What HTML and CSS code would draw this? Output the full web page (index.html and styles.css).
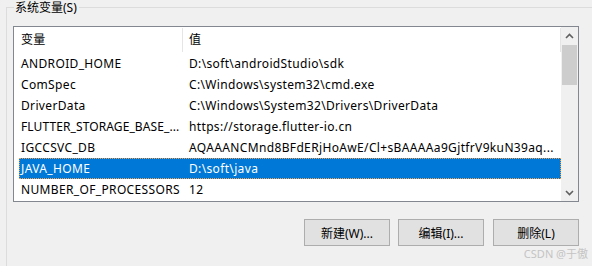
FILE: index.html
```html
<!DOCTYPE html>
<html lang="zh-CN">
<head>
    <meta charset="UTF-8">
    <title>系统变量</title>
    <link rel="stylesheet" href="styles.css">
</head>
<body>

<fieldset class="group">
    <legend>系统变量(S)</legend>

    <div class="list">
        <div class="list-body">
            <div class="list-head">
                <div class="col name">变量</div>
                <div class="col value">值</div>
            </div>
            <div class="row">
                <div class="col name">ANDROID_HOME</div>
                <div class="col value">D:\soft\androidStudio\sdk</div>
            </div>
            <div class="row">
                <div class="col name">ComSpec</div>
                <div class="col value">C:\Windows\system32\cmd.exe</div>
            </div>
            <div class="row">
                <div class="col name">DriverData</div>
                <div class="col value">C:\Windows\System32\Drivers\DriverData</div>
            </div>
            <div class="row">
                <div class="col name tight">FLUTTER_STORAGE_BASE_...</div>
                <div class="col value">https://storage.flutter-io.cn</div>
            </div>
            <div class="row">
                <div class="col name">IGCCSVC_DB</div>
                <div class="col value">AQAAANCMnd8BFdERjHoAwE/Cl+sBAAAAa9GjtfrV9kuN39aq...</div>
            </div>
            <div class="row selected">
                <div class="col name">JAVA_HOME</div>
                <div class="col value">D:\soft\java</div>
            </div>
            <div class="row">
                <div class="col name">NUMBER_OF_PROCESSORS</div>
                <div class="col value">12</div>
            </div>
        </div>
        <div class="scrollbar">
            <div class="arrow">
                <svg width="9" height="6" viewBox="0 0 9 6"><path d="M1 5 L4.5 1.5 L8 5" fill="none" stroke="#606060" stroke-width="1.6"/></svg>
            </div>
            <div class="track">
                <div class="thumb"></div>
            </div>
            <div class="arrow">
                <svg width="9" height="6" viewBox="0 0 9 6"><path d="M1 1 L4.5 4.5 L8 1" fill="none" stroke="#606060" stroke-width="1.6"/></svg>
            </div>
        </div>
    </div>

    <div class="buttons">
        <button>新建(W)...</button>
        <button>编辑(I)...</button>
        <button>删除(L)</button>
    </div>
</fieldset>

<div class="watermark">CSDN @于傲</div>

</body>
</html>
```

FILE: styles.css
```css
body {
    margin: 0;
    width: 592px;
    height: 266px;
    overflow: hidden;
    background: #f0f0f0;
    font-family: "Noto Sans", "Noto Sans CJK SC", sans-serif;
    font-size: 12px;
    color: #000;
    position: relative;
}
.group {
    margin: 0 0 0 6px;
    width: 600px;
    height: 268px;
    padding: 0 0 0 6px;
    border: 1px solid #dcdcdc;
    box-sizing: border-box;
}
.group legend {
    margin-left: 1px;
    padding: 0 2px 0 1px;
    line-height: 15px;
    height: 15px;
}
.list {
    display: flex;
    width: 566px;
    height: 176px;
    margin-top: 11px;
    border: 1px solid #828790;
    background: #fff;
    box-sizing: border-box;
    letter-spacing: 0.35px;
}
.list-body {
    flex: 1;
    overflow: hidden;
}
.list-head {
    display: flex;
    height: 26px;
    align-items: center;
    margin-left: 5px;
}
.list-head .col {
    height: 24px;
    line-height: 24px;
    border-right: 1px solid #e5e5e5;
}
.row {
    display: flex;
    height: 21px;
    line-height: 21px;
    margin-left: 5px;
}
.col {
    white-space: nowrap;
    overflow: hidden;
    box-sizing: border-box;
}
.col.name {
    width: 164px;
    padding: 0 2px 0 2px;
}
.col.name.tight {
    letter-spacing: 0.1px;
}
.col.value {
    width: 378px;
    padding: 0 6px 0 6px;
}
.row.selected {
    background: #0078d7;
    color: #fff;
    outline: 1px dotted #f0a050;
    outline-offset: -1px;
}
.scrollbar {
    width: 17px;
    display: flex;
    flex-direction: column;
    background: #f0f0f0;
}
.arrow {
    height: 17px;
    display: flex;
    align-items: center;
    justify-content: center;
}
.track {
    flex: 1;
    padding: 1px 1px 0 1px;
}
.thumb {
    height: 40px;
    background: #cdcdcd;
}
.buttons {
    display: flex;
    justify-content: flex-end;
    width: 566px;
    margin-top: 17px;
}
.buttons button {
    width: 86px;
    height: 27px;
    margin-left: 8px;
    background: #e1e1e1;
    border: 1px solid #adadad;
    border-radius: 0;
    font-family: "Noto Sans", "Noto Sans CJK SC", sans-serif;
    font-size: 12px;
    color: #000;
    padding: 0;
}
.buttons button:first-child {
    margin-left: 0;
}
.buttons button:nth-child(2) {
    margin-right: 1px;
}
.watermark {
    position: absolute;
    right: 4px;
    bottom: 5px;
    font-size: 11px;
    color: #c4c4c4;
}
```
